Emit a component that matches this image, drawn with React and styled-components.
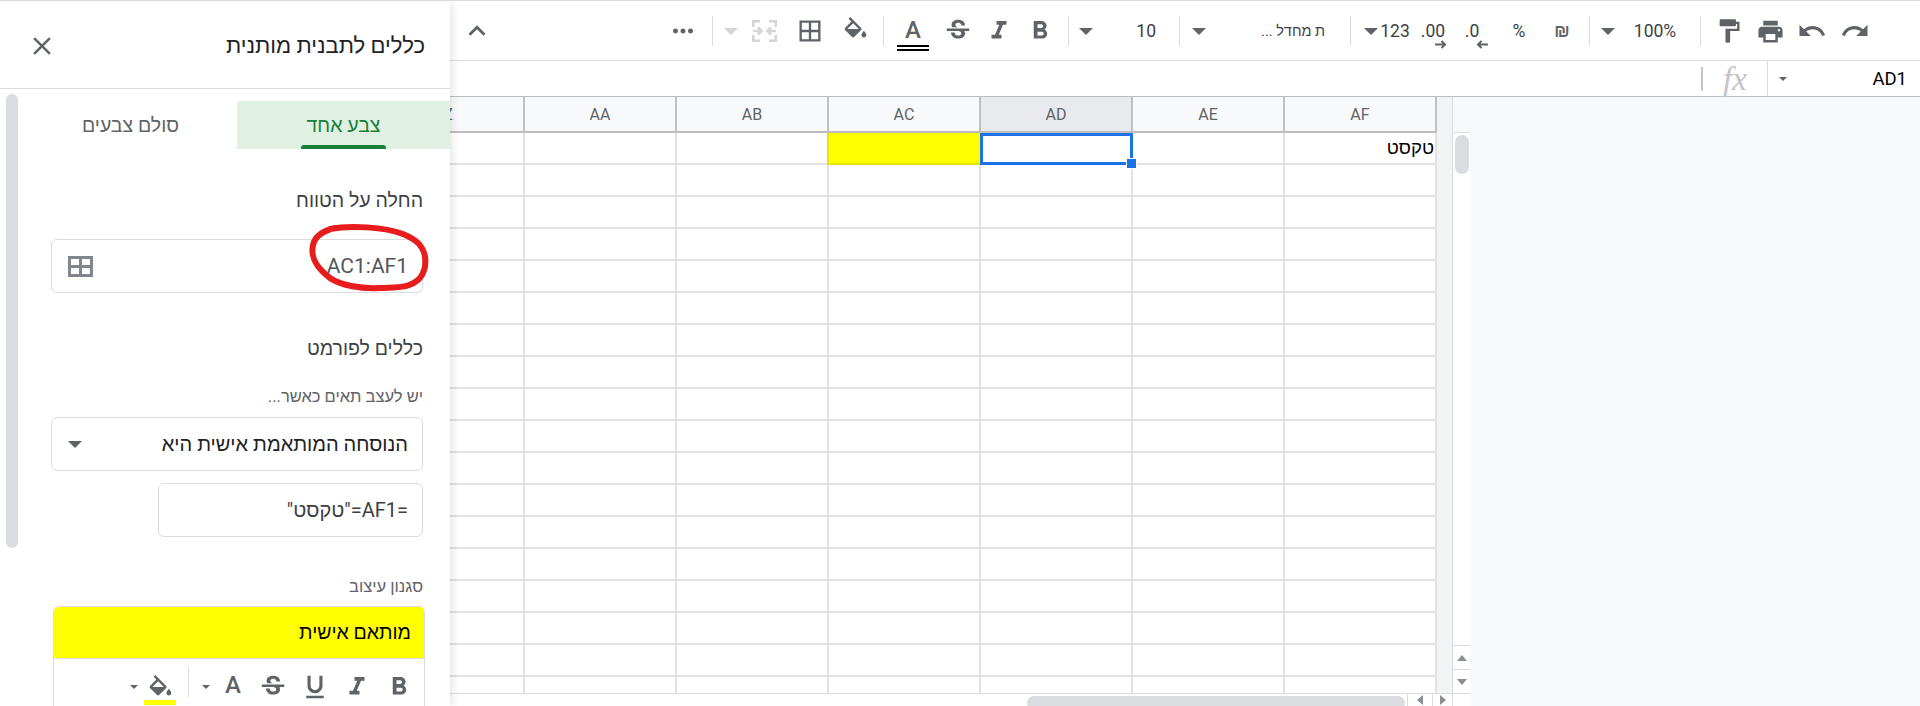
import React from "react";
import styled, { createGlobalStyle } from "styled-components";
import {
  MdClose,
  MdExpandLess,
  MdMoreHoriz,
  MdBorderAll,
  MdStrikethroughS,
  MdFormatItalic,
  MdFormatBold,
  MdFormatUnderlined,
  MdFormatPaint,
  MdPrint,
  MdUndo,
  MdRedo,
} from "react-icons/md";

const GlobalStyle = createGlobalStyle`
  html, body {
    margin: 0;
    padding: 0;
    height: 100%;
    overflow: hidden;
    background: #fff;
    font-family: Roboto, "Liberation Sans", sans-serif;
  }
  * { box-sizing: border-box; }
`;

const ICON = "#5f6368";
const FILL_PATH =
  "M16.56 8.94L7.62 0 6.21 1.41l2.38 2.38-5.15 5.15c-.59.59-.59 1.54 0 2.12l5.5 5.5c.29.29.68.44 1.06.44s.77-.15 1.06-.44l5.5-5.5c.59-.58.59-1.53 0-2.12zM5.21 10L10 5.21 14.79 10H5.21zM19 11.5s-2 2.17-2 3.5c0 1.1.9 2 2 2s2-.9 2-2c0-1.33-2-3.5-2-3.5z";

const FillIcon = () => (
  <svg width="29" height="24" viewBox="0 0 24 20" fill={ICON}>
    <path d={FILL_PATH} />
  </svg>
);

const MergeIcon = () => (
  <svg width="25" height="22" viewBox="0 0 25 22" fill="none" stroke="#d4d5d7" strokeWidth="2.6">
    <path d="M1.3 7V1.3H8M17 1.3h6.7V7M1.3 15v5.7H8M23.7 15v5.7H17" />
    <path d="M1 11h8M6 7.5l3.5 3.5L6 14.5M24 11h-8M19 7.5L15.5 11l3.5 3.5" />
  </svg>
);

const RangeIcon = () => (
  <svg width="25" height="21" viewBox="0 0 25 21" fill="none" stroke="#80868b" strokeWidth="3">
    <rect x="1.5" y="1.5" width="22" height="18" />
    <path d="M12.5 1.5v18M1.5 10.5h22" />
  </svg>
);

const ArrowIcon = ({ left }) => (
  <svg width="12" height="9" viewBox="0 0 12 9" fill="none" stroke={ICON} strokeWidth="2">
    {left ? <path d="M12 4.5H2M5.5 1L2 4.5 5.5 8" /> : <path d="M0 4.5h10M6.5 1L10 4.5 6.5 8" />}
  </svg>
);

const Page = styled.div`
  display: flex;
  height: 706px;
  width: 1920px;
  padding-top: 1px;
  overflow: hidden;
  background: #fff;
  border-top: 1px solid #dadce0;
`;

/* ---- side panel ---- */

const Panel = styled.aside`
  position: relative;
  z-index: 3;
  flex: 0 0 450px;
  direction: rtl;
  background: #fff;
  box-shadow: 2px 0 8px rgba(60, 64, 67, 0.14);
`;

const PanelHeader = styled.header`
  display: flex;
  align-items: center;
  justify-content: space-between;
  height: 86px;
  padding: 0 25px 0 27px;
  border-bottom: 1px solid #dadce0;
  margin-top: 1px;
`;

const PanelTitle = styled.h1`
  margin: 0;
  font-size: 22px;
  font-weight: 400;
  color: #202124;
`;

const CloseButton = styled.span`
  display: flex;
  color: ${ICON};
`;

const PanelThumb = styled.div`
  position: absolute;
  left: 6px;
  top: 92px;
  width: 12px;
  height: 454px;
  border-radius: 6px;
  background: #dadce0;
`;

const Tabs = styled.div`
  display: flex;
  margin-top: 12px;
  padding-left: 24px;
`;

const Tab = styled.div`
  position: relative;
  display: flex;
  align-items: center;
  justify-content: center;
  width: 213px;
  height: 48px;
  font-size: 19.5px;
  color: ${(p) => (p.$active ? "#188038" : "#5f6368")};
  background: ${(p) => (p.$active ? "#e0f1e3" : "transparent")};

  ${(p) =>
    p.$active &&
    `&::after {
      content: "";
      position: absolute;
      bottom: 0;
      left: 64px;
      width: 85px;
      height: 4px;
      border-radius: 3px 3px 0 0;
      background: #188038;
    }`}
`;

const Form = styled.div`
  display: flex;
  flex-direction: column;
  align-items: flex-start;
  padding: 0 27px 0 51px;
`;

const SectionLabel = styled.div`
  margin-top: ${(p) => p.$top}px;
  height: 20px;
  line-height: 20px;
  font-size: 19.5px;
  color: #3c4043;
`;

const SmallLabel = styled.div`
  margin-top: ${(p) => p.$top}px;
  height: 18px;
  line-height: 18px;
  font-size: 16.5px;
  color: #5f6368;
`;

const Field = styled.div`
  position: relative;
  display: flex;
  align-items: center;
  justify-content: space-between;
  flex: none;
  width: ${(p) => p.$width || 372}px;
  height: 54px;
  margin-top: ${(p) => p.$top}px;
  padding: 0 14px 0 16px;
  border: 1px solid #dadce0;
  border-radius: 6px;
  font-size: ${(p) => p.$size || 20}px;
  color: ${(p) => p.$color || "#202124"};
`;

const ScribbleMark = styled.svg`
  position: absolute;
  left: 254px;
  top: -19px;
  pointer-events: none;
`;

const StyleBox = styled.div`
  flex: none;
  width: 372px;
  margin: 10px -2px 0 0;
  border: 1px solid #dadce0;
  border-radius: 6px 6px 0 0;
  overflow: hidden;
`;

const StylePreview = styled.div`
  height: 52px;
  line-height: 52px;
  padding-right: 13px;
  background: #ffff00;
  border-bottom: 1px solid #dadce0;
  font-size: 19.5px;
  color: #000;
`;

const StyleTools = styled.div`
  display: flex;
  height: 48px;
  padding: 8px 4px 0 0;
  direction: rtl;
`;

const ToolSlot = styled.div`
  flex: none;
  display: flex;
  align-items: center;
  justify-content: ${(p) => p.$justify || "center"};
  width: ${(p) => p.$w}px;
  height: ${(p) => p.$h || 40}px;
  padding-right: ${(p) => p.$pad || 0}px;
  color: ${ICON};
`;

const LiftIcon = styled.span`
  display: flex;
  margin-top: -4px;
`;

const FillStack = styled.div`
  display: flex;
  flex-direction: column;
  align-items: center;
  width: 36px;
  padding-top: 6px;
`;

const FillBar = styled.div`
  width: 32px;
  height: 5px;
  margin-top: 1px;
  background: #ffff00;
`;

const LetterA = styled.span`
  font-size: 24px;
  font-weight: 500;
  line-height: 24px;
  color: ${ICON};
`;

const Caret = styled.span`
  display: block;
  width: 0;
  height: 0;
  border-left: ${(p) => p.$size || 7}px solid transparent;
  border-right: ${(p) => p.$size || 7}px solid transparent;
  border-top: ${(p) => p.$size || 7}px solid ${(p) => p.$color || ICON};
`;

const Divider = styled.span`
  display: block;
  width: 1px;
  height: 30px;
  background: #dadce0;
`;

const StyleDivider = styled(Divider)`
  margin-top: -10px;
`;

/* ---- main area ---- */

const Main = styled.main`
  flex: 1;
  display: flex;
  flex-direction: column;
  min-width: 0;
`;

const Toolbar = styled.div`
  flex: 0 0 59px;
  display: flex;
  align-items: center;
  justify-content: flex-end;
  padding-right: 42px;
  border-bottom: 1px solid #dadce0;
`;

const Chevron = styled.span`
  display: flex;
  justify-content: center;
  width: 54px;
  margin-right: auto;
  color: ${ICON};
`;

const ToolText = styled.span`
  font-size: 17.5px;
  white-space: nowrap;
  color: #3c4043;
`;

const FontNameText = styled(ToolText)`
  direction: rtl;
  font-size: 14.5px;
`;

const ShekelText = styled(ToolText)`
  font-family: "Liberation Sans", sans-serif;
  font-weight: 700;
  color: #5f6368;
`;

const TextColorStack = styled.div`
  display: flex;
  flex-direction: column;
  align-items: center;
  padding-top: 6px;
`;

const DoubleBar = styled.div`
  width: 32px;
  height: 6px;
  margin-top: 3px;
  border-top: 2px solid #000;
  border-bottom: 2px solid #000;
`;

const DecimalLabel = styled.span`
  position: relative;
  font-size: 17.5px;
  color: #3c4043;

  svg {
    position: absolute;
    bottom: -8px;
    ${(p) => (p.$left ? "right: -9px;" : "right: -2px;")}
  }
`;

const FormulaBar = styled.div`
  flex: 0 0 36px;
  display: flex;
  align-items: center;
  justify-content: flex-end;
  border-bottom: 1px solid #bdbdbd;
`;

const ThickRule = styled.span`
  width: 2px;
  height: 24px;
  background: #c4c6c9;
`;

const FxMark = styled.span`
  display: flex;
  justify-content: center;
  width: 64px;
  font-family: "Liberation Serif", serif;
  font-style: italic;
  font-size: 33px;
  line-height: 30px;
  color: #c2c4c7;
`;

const NameCaretBox = styled.span`
  display: flex;
  align-items: center;
  justify-content: center;
  width: 30px;
  height: 35px;
  border-left: 1px solid #dadce0;
`;

const NameBox = styled.span`
  width: 123px;
  padding-right: 13px;
  text-align: right;
  font-size: 18.5px;
  color: #000;
`;

const SheetArea = styled.div`
  flex: 1;
  min-height: 0;
  display: flex;
  background: #f8f9fa;
`;

const SheetFrame = styled.div`
  flex: 0 0 1020px;
  display: flex;
  flex-direction: column;
  background: #fff;
`;

const SheetBody = styled.div`
  flex: 1;
  min-height: 0;
  display: flex;
`;

const GridPane = styled.div`
  flex: 0 0 987px;
  overflow: hidden;
`;

const GridInner = styled.div`
  margin-left: -77px;
  width: 1064px;
`;

const Row = styled.div`
  display: flex;
`;

const ColumnHead = styled.div`
  flex: 0 0 152px;
  height: 36px;
  display: flex;
  align-items: center;
  justify-content: center;
  background: ${(p) => (p.$active ? "#e8eaed" : "#f8f9fa")};
  border-right: 2px solid #c0c0c0;
  border-bottom: 2px solid #bdbdbd;
  font-size: 16px;
  color: #5f6368;
`;

const Cell = styled.div`
  position: relative;
  z-index: ${(p) => (p.$selected ? 2 : "auto")};
  flex: 0 0 152px;
  height: 32px;
  line-height: 31px;
  padding-right: 1px;
  direction: rtl;
  font-size: 18.5px;
  color: #000;
  border-right: 2px solid #e2e2e2;
  border-bottom: 2px solid ${(p) => (p.$fill ? "#e6e600" : "#e2e2e2")};
  background: ${(p) => p.$fill || "#fff"};
  ${(p) => p.$fill && "box-shadow: -2px 0 0 #e6e600;"}
`;

const SelectionBox = styled.div`
  position: absolute;
  left: -1px;
  right: -2px;
  top: 0;
  bottom: -2px;
  border: 3px solid #1a73e8;
  direction: ltr;
`;

const SelectionHandle = styled.div`
  position: absolute;
  right: -7px;
  bottom: -7px;
  width: 11px;
  height: 11px;
  background: #1a73e8;
  border: 1px solid #fff;
`;

const Gutter = styled.div`
  flex: 0 0 16px;
  background: #f1f3f4;
  border-right: 1px solid #dadce0;
`;

const VScroll = styled.div`
  flex: 0 0 17px;
  display: flex;
  flex-direction: column;
`;

const VScrollHead = styled.div`
  flex: 0 0 36px;
  background: #f8f9fa;
  border-bottom: 1px solid #dadce0;
`;

const VTrack = styled.div`
  flex: 1;
  padding: 2px 1px 0 2px;
`;

const VThumb = styled.div`
  height: 39px;
  border-radius: 7px;
  background: #dadce0;
`;

const VButton = styled.div`
  flex: 0 0 24px;
  display: flex;
  align-items: center;
  justify-content: center;
  border-top: 1px solid #dadce0;
`;

const Triangle = styled.span`
  display: block;
  width: 0;
  height: 0;
  border-style: solid;
  border-color: transparent;
  ${(p) =>
    ({
      up: "border-width: 0 5px 6px; border-bottom-color: #8a8d91;",
      down: "border-width: 6px 5px 0; border-top-color: #8a8d91;",
      left: "border-width: 5px 6px 5px 0; border-right-color: #8a8d91;",
      right: "border-width: 5px 0 5px 6px; border-left-color: #8a8d91;",
    })[p.$dir]}
`;

const HScroll = styled.div`
  flex: 0 0 13px;
  display: flex;
  justify-content: flex-end;
  border-top: 1px solid #dadce0;
  overflow: hidden;
`;

const HThumb = styled.div`
  flex: 0 0 378px;
  height: 14px;
  margin: 2px 2px 0 0;
  border-radius: 7px;
  background: #dadce0;
`;

const HButton = styled.div`
  flex: 0 0 ${(p) => p.$w}px;
  display: flex;
  align-items: center;
  justify-content: center;
  border-left: 1px solid #dadce0;
`;

const Spacer = ({ w }) => <ToolSlot $w={w}><Divider /></ToolSlot>;

const columns = ["Z", "AA", "AB", "AC", "AD", "AE", "AF"];
const rowIds = Array.from({ length: 18 }, (_, i) => i);

const SideBar = () => (
  <Panel>
    <PanelHeader>
      <PanelTitle>כללים לתבנית מותנית</PanelTitle>
      <CloseButton><MdClose size={30} /></CloseButton>
    </PanelHeader>
    <PanelThumb />
    <Tabs>
      <Tab $active>צבע אחד</Tab>
      <Tab>סולם צבעים</Tab>
    </Tabs>
    <Form>
      <SectionLabel $top={42}>החלה על הטווח</SectionLabel>
      <Field $top={28} $size={21} $color="#50555a">
        <span>AC1:AF1</span>
        <RangeIcon />
        <ScribbleMark width="126" height="74" viewBox="306 220 126 74" fill="none">
          <path
            d="M330 228C350 224 385 226 403 233C410 236 414 238 418 242C428 252 427 268 420 277C410 288 395 286 380 287C360 288 340 284 330 277C318 268 310 258 313 244C315 235 322 230 335 227"
            stroke="#e81c1c"
            strokeWidth="6"
            strokeLinecap="round"
          />
        </ScribbleMark>
      </Field>
      <SectionLabel $top={46}>כללים לפורמט</SectionLabel>
      <SmallLabel $top={29}>יש לעצב תאים כאשר...</SmallLabel>
      <Field $top={11}>
        <span>הנוסחה המותאמת אישית היא</span>
        <Caret />
      </Field>
      <Field $top={12} $width={265} $color="#3c4043">
        <span>=AF1="טקסט"</span>
      </Field>
      <SmallLabel $top={41}>סגנון עיצוב</SmallLabel>
      <StyleBox>
        <StylePreview>מותאם אישית</StylePreview>
        <StyleTools>
          <ToolSlot $w={42}><MdFormatBold size={30} /></ToolSlot>
          <ToolSlot $w={42}><MdFormatItalic size={30} /></ToolSlot>
          <ToolSlot $w={42}><MdFormatUnderlined size={30} /></ToolSlot>
          <ToolSlot $w={42}><MdStrikethroughS size={30} /></ToolSlot>
          <ToolSlot $w={38}><LiftIcon><LetterA>A</LetterA></LiftIcon></ToolSlot>
          <ToolSlot $w={16}><Caret $size={4} /></ToolSlot>
          <ToolSlot $w={20}><StyleDivider /></ToolSlot>
          <ToolSlot $w={36}>
            <FillStack>
              <FillIcon />
              <FillBar />
            </FillStack>
          </ToolSlot>
          <ToolSlot $w={16}><Caret $size={4} /></ToolSlot>
        </StyleTools>
      </StyleBox>
    </Form>
  </Panel>
);

const MainToolbar = () => (
  <Toolbar>
    <Chevron><MdExpandLess size={34} /></Chevron>
    <ToolSlot $w={42}><MdMoreHoriz size={30} /></ToolSlot>
    <Spacer w={16} />
    <ToolSlot $w={22}><Caret $color="#d4d5d7" /></ToolSlot>
    <ToolSlot $w={45}><MergeIcon /></ToolSlot>
    <ToolSlot $w={46}><MdBorderAll size={28} /></ToolSlot>
    <ToolSlot $w={44}><LiftIcon><FillIcon /></LiftIcon></ToolSlot>
    <Spacer w={12} />
    <ToolSlot $w={48} $h={48}>
      <TextColorStack>
        <LetterA>A</LetterA>
        <DoubleBar />
      </TextColorStack>
    </ToolSlot>
    <ToolSlot $w={42}><MdStrikethroughS size={30} /></ToolSlot>
    <ToolSlot $w={40}><MdFormatItalic size={30} /></ToolSlot>
    <ToolSlot $w={42}><MdFormatBold size={30} /></ToolSlot>
    <Spacer w={14} />
    <ToolSlot $w={22}><Caret /></ToolSlot>
    <ToolSlot $w={74} $justify="flex-end" $pad={15}><ToolText>10</ToolText></ToolSlot>
    <Spacer w={16} />
    <ToolSlot $w={24}><Caret /></ToolSlot>
    <ToolSlot $w={131} $justify="flex-end" $pad={17}><FontNameText>ת מחדל ...</FontNameText></ToolSlot>
    <Spacer w={17} />
    <ToolSlot $w={23}><Caret /></ToolSlot>
    <ToolSlot $w={26}><ToolText>123</ToolText></ToolSlot>
    <ToolSlot $w={50}><DecimalLabel>.00<ArrowIcon /></DecimalLabel></ToolSlot>
    <ToolSlot $w={38} $pad={10}><DecimalLabel $left>.0<ArrowIcon left /></DecimalLabel></ToolSlot>
    <ToolSlot $w={46}><ToolText>%</ToolText></ToolSlot>
    <ToolSlot $w={40}><ShekelText>₪</ShekelText></ToolSlot>
    <Spacer w={14} />
    <ToolSlot $w={24}><Caret /></ToolSlot>
    <ToolSlot $w={70}><ToolText>100%</ToolText></ToolSlot>
    <Spacer w={20} />
    <ToolSlot $w={38}><MdFormatPaint size={28} /></ToolSlot>
    <ToolSlot $w={44}><MdPrint size={29} /></ToolSlot>
    <ToolSlot $w={40}><MdUndo size={30} /></ToolSlot>
    <ToolSlot $w={46}><MdRedo size={30} /></ToolSlot>
  </Toolbar>
);

const SheetGrid = () => (
  <GridPane>
    <GridInner>
      <Row>
        {columns.map((c) => (
          <ColumnHead key={c} $active={c === "AD"}>{c}</ColumnHead>
        ))}
      </Row>
      {rowIds.map((r) => (
        <Row key={r}>
          {columns.map((c) => {
            const first = r === 0;
            const selected = first && c === "AD";
            return (
              <Cell key={c} $selected={selected} $fill={first && c === "AC" ? "#ffff00" : undefined}>
                {first && c === "AF" && "טקסט"}
                {selected && (
                  <SelectionBox>
                    <SelectionHandle />
                  </SelectionBox>
                )}
              </Cell>
            );
          })}
        </Row>
      ))}
    </GridInner>
  </GridPane>
);

export default function App() {
  return (
    <>
      <GlobalStyle />
      <Page>
        <SideBar />
        <Main>
          <MainToolbar />
          <FormulaBar>
            <ThickRule />
            <FxMark>fx</FxMark>
            <NameCaretBox><Caret $size={4} /></NameCaretBox>
            <NameBox>AD1</NameBox>
          </FormulaBar>
          <SheetArea>
            <SheetFrame>
              <SheetBody>
                <SheetGrid />
                <Gutter />
                <VScroll>
                  <VScrollHead />
                  <VTrack><VThumb /></VTrack>
                  <VButton><Triangle $dir="up" /></VButton>
                  <VButton><Triangle $dir="down" /></VButton>
                </VScroll>
              </SheetBody>
              <HScroll>
                <HThumb />
                <HButton $w={25}><Triangle $dir="left" /></HButton>
                <HButton $w={20}><Triangle $dir="right" /></HButton>
                <HButton $w={18} />
              </HScroll>
            </SheetFrame>
          </SheetArea>
        </Main>
      </Page>
    </>
  );
}
